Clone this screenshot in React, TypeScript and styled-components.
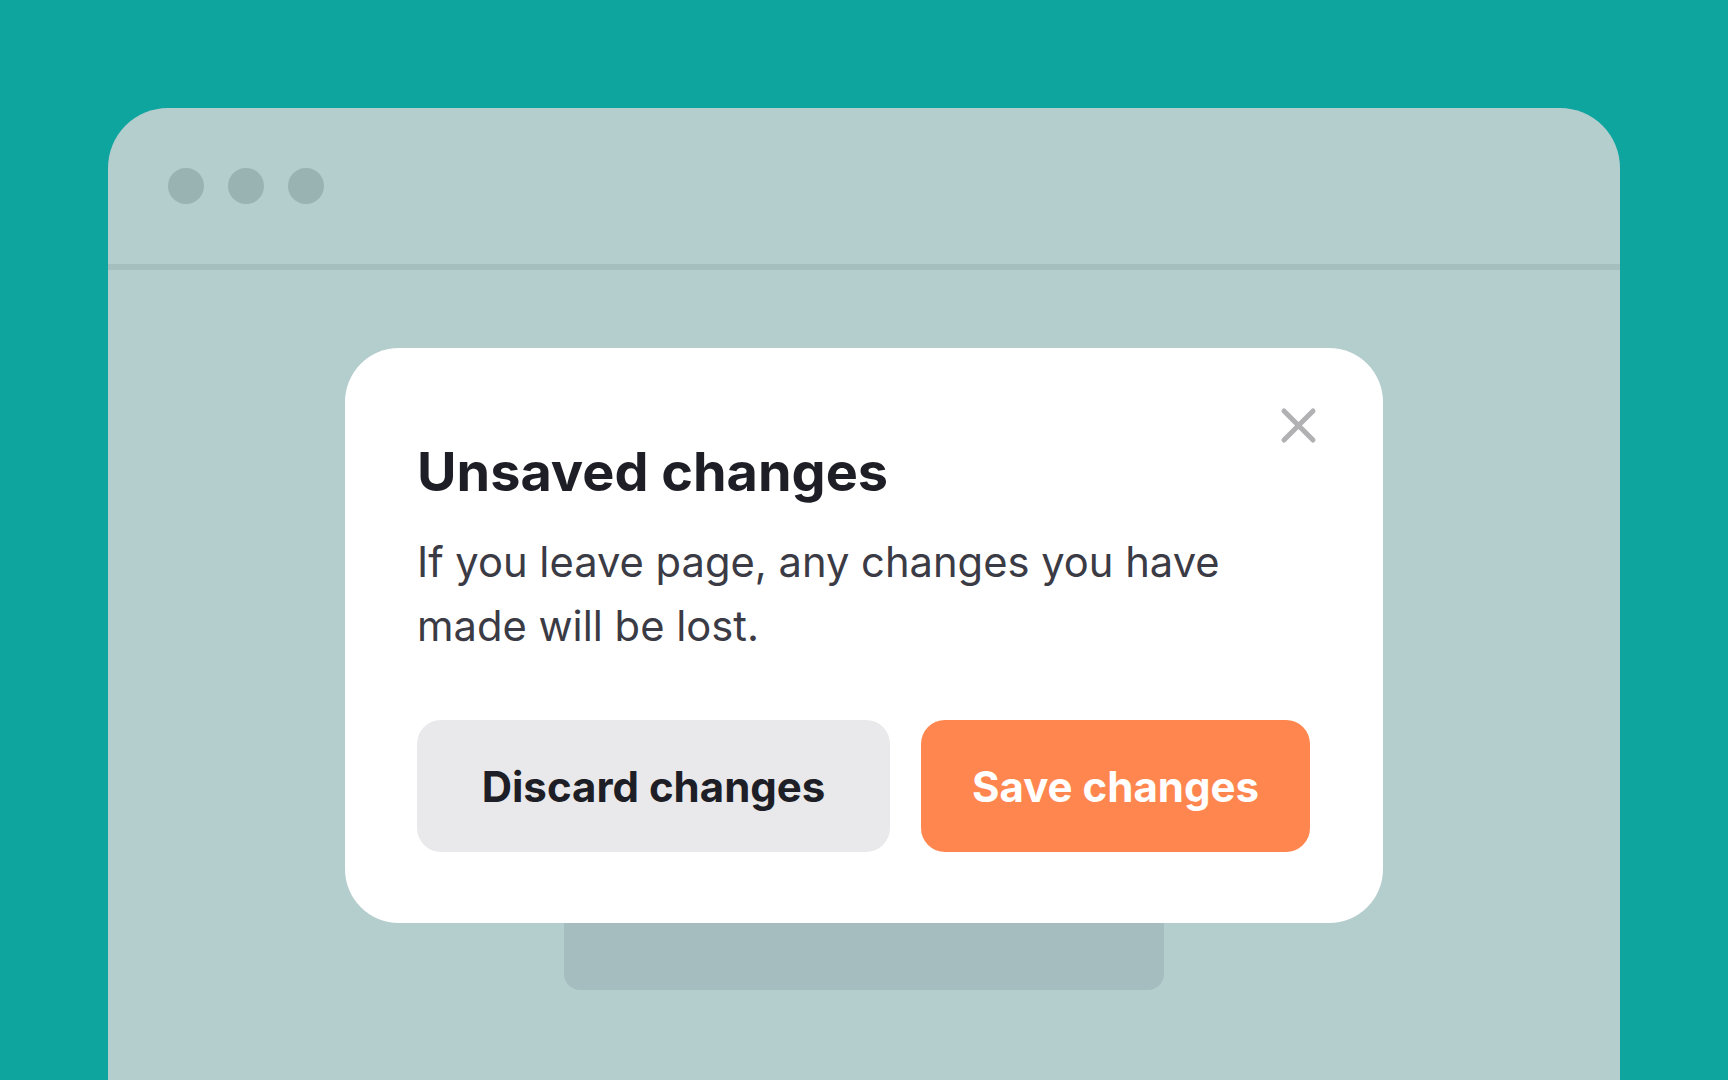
import React from "react";
import styled, { createGlobalStyle } from "styled-components";

const GlobalStyle = createGlobalStyle`
  html, body {
    margin: 0;
    padding: 0;
    background: #0ea59f;
    overflow: hidden;
  }
  * { box-sizing: border-box; }
`;

const Page = styled.div`
  width: 1728px;
  height: 1080px;
  background: #0ea59f;
  padding: 108px 108px 0;
  overflow: hidden;
  font-family: Inter, "Liberation Sans", sans-serif;
`;

const BrowserWindow = styled.div`
  background: #b4cdcd;
  border-radius: 60px 60px 0 0;
  height: 1000px;
  display: flex;
  flex-direction: column;
`;

const TitleBar = styled.div`
  height: 162px;
  border-bottom: 6px solid #a5bfbf;
  display: flex;
  align-items: center;
  gap: 24px;
  padding: 0 0 0 60px;
`;

const Dot = styled.span`
  width: 36px;
  height: 36px;
  border-radius: 50%;
  background: #99b3b3;
`;

const Body = styled.div`
  display: flex;
  flex-direction: column;
  align-items: center;
  padding-top: 78px;
`;

const Modal = styled.div`
  position: relative;
  z-index: 1;
  width: 1038px;
  background: #ffffff;
  border-radius: 54px;
  padding: 92px 73px 71px 72px;
`;

const CloseButton = styled.button`
  position: absolute;
  top: 59px;
  right: 66px;
  width: 37px;
  height: 37px;
  padding: 0;
  border: none;
  background: transparent;
  cursor: pointer;
  display: flex;
`;

const Title = styled.h2`
  margin: 0;
  font-size: 54px;
  line-height: 63px;
  font-weight: 700;
  color: #1e1e26;
`;

const Message = styled.p`
  margin: 27px 0 0;
  font-size: 41.7px;
  line-height: 64px;
  font-weight: 400;
  color: #3b3b45;
  max-width: 820px;
`;

const Actions = styled.div`
  margin-top: 62px;
  display: grid;
  grid-template-columns: 473px 1fr;
  gap: 31px;
`;

const ActionButton = styled.button<{ $variant: "secondary" | "primary" }>`
  height: 132px;
  border: none;
  border-radius: 24px;
  font-family: Inter, "Liberation Sans", sans-serif;
  font-size: 42px;
  font-weight: 700;
  cursor: pointer;
  background: ${(p) => (p.$variant === "primary" ? "#ff874f" : "#e9e9eb")};
  color: ${(p) => (p.$variant === "primary" ? "#ffffff" : "#1e1e26")};
`;

const BackCard = styled.div`
  width: 600px;
  height: 67px;
  background: #a5bdbe;
  border-radius: 0 0 16px 16px;
`;

const CloseIcon = () => (
  <svg width="37" height="37" viewBox="0 0 37 37" fill="none">
    <path
      d="M4 4L33 33M33 4L4 33"
      stroke="#b1b1b4"
      strokeWidth="5"
      strokeLinecap="round"
    />
  </svg>
);

export default function App() {
  return (
    <>
      <GlobalStyle />
      <Page>
        <BrowserWindow>
          <TitleBar>
            <Dot />
            <Dot />
            <Dot />
          </TitleBar>
          <Body>
            <Modal role="dialog" aria-labelledby="unsaved-title">
              <CloseButton aria-label="Close">
                <CloseIcon />
              </CloseButton>
              <Title id="unsaved-title">Unsaved changes</Title>
              <Message>
                If you leave page, any changes you have made will be lost.
              </Message>
              <Actions>
                <ActionButton $variant="secondary">Discard changes</ActionButton>
                <ActionButton $variant="primary">Save changes</ActionButton>
              </Actions>
            </Modal>
            <BackCard />
          </Body>
        </BrowserWindow>
      </Page>
    </>
  );
}
